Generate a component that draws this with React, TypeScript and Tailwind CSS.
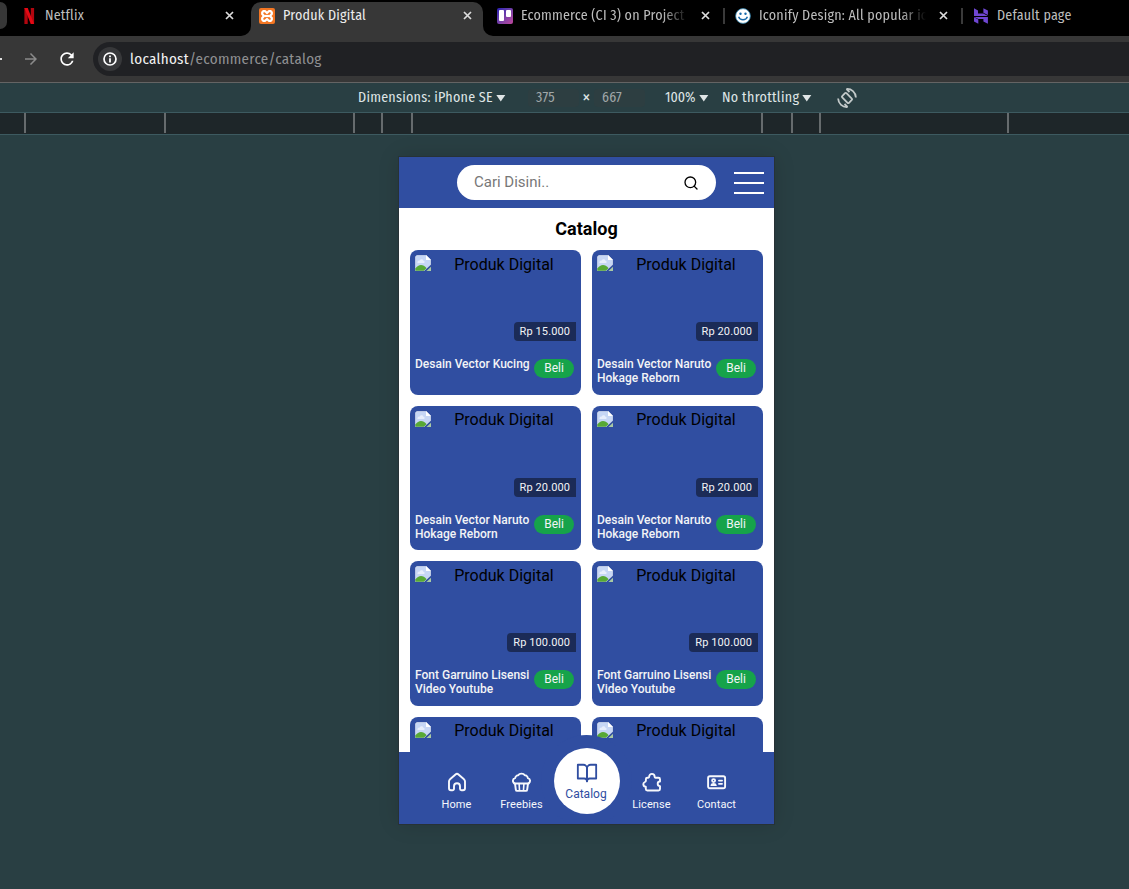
import type { ReactNode } from "react";
import { MdArrowForward, MdRefresh } from "react-icons/md";
import { FiBookOpen, FiSearch } from "react-icons/fi";

const CloseIcon = () => (
  <svg width="9" height="9" viewBox="0 0 9 9" className="shrink-0">
    <path d="M1 1L8 8M8 1L1 8" stroke="currentColor" strokeWidth="1.7" />
  </svg>
);

const InfoIcon = () => (
  <svg width="14" height="14" viewBox="0 0 14 14">
    <circle cx="7" cy="7" r="6" fill="none" stroke="currentColor" strokeWidth="1.700" />
    <path d="M6.100 3.500H7.900V5.200H6.100ZM6.100 6.200H7.900V10.500H6.100Z" fill="currentColor" />
  </svg>
);

const NetflixLogo = () => (
  <svg width="16" height="16" viewBox="0 0 16 16">
    <path d="M3.400 0H6.700V16H3.400Z M9.800 0H13.100V16H9.800Z" fill="#b1060f" />
    <path d="M3.400 0H6.700L13.100 16H9.800Z" fill="#e50914" />
  </svg>
);

const XamppLogo = () => (
  <span className="flex h-4 w-4 items-center justify-center rounded-[2px] bg-[#f37623] text-white">
    <svg width="14" height="14" viewBox="0 0 14 14" fill="none" stroke="currentColor" strokeWidth="2.2" strokeLinejoin="round">
      <path d="M3.2 2.2H5.2L7 4L8.8 2.2H10.8L11.8 3.5V5L10 7L11.8 9V10.5L10.8 11.8H8.8L7 10L5.2 11.8H3.2L2.2 10.5V9L4 7L2.2 5V3.5Z" />
      <path d="M4.5 7H9.5" />
    </svg>
  </span>
);

const TrelloLogo = () => (
  <span className="flex h-4 w-4 items-start justify-center gap-[2px] rounded-[2px] bg-linear-to-br from-[#2a1cb4] to-[#c0459a] pt-[2px]">
    <span className="h-[11px] w-[5px] rounded-[1px] bg-white" />
    <span className="h-[7px] w-[5px] rounded-[1px] bg-white" />
  </span>
);

const IconifyLogo = () => (
  <svg width="16" height="16" viewBox="0 0 16 16">
    <circle cx="8" cy="8" r="7.4" fill="#fff" stroke="#2a7ca8" strokeWidth=".8" />
    <circle cx="5.5" cy="5.7" r="1.2" fill="#1769aa" />
    <circle cx="10.5" cy="5.7" r="1.2" fill="#1769aa" />
    <path d="M3.6 8.8C5 12.8 11 12.8 12.4 8.8" fill="none" stroke="#1769aa" strokeWidth="1.4" />
  </svg>
);

const HostingerLogo = () => (
  <svg width="16" height="16" viewBox="0 0 16 16" fill="#6f46d2">
    <path d="M1 .3L5 2.500V5.600H10.400L14.900 8H1Z" />
    <path d="M10.400 .3L14.900 2.500V7L10.400 4.700Z" />
    <path d="M1 8.900H14.900V15.700L10.400 13.400V10.900H5.300L1 8.900Z" />
    <path d="M1 9.300L5.300 11.500V15.700L1 13.400Z" />
  </svg>
);

const RotateIcon = () => (
  <svg width="20" height="20" viewBox="0 0 20 20" fill="none" stroke="#c3caca" strokeWidth="1.800">
    <rect x="7" y="5.200" width="6" height="9.600" rx="1" transform="rotate(-45 10 10)" />
    <path d="M9.500 1C14.500 .6 18.600 4.400 18.900 9.500" />
    <path d="M9.500 1L12.500 4" />
    <path d="M10.500 19C5.500 19.400 1.400 15.600 1.100 10.500" />
    <path d="M10.500 19L7.500 16" />
  </svg>
);

type TabProps = { icon: ReactNode; title: string; active?: boolean; fade?: boolean; divider?: boolean; closable?: boolean };

function Tab({ icon, title, active, fade, divider, closable = true }: TabProps) {
  return (
    <div
      className={`relative flex h-[34px] w-[232px] shrink-0 items-center pb-[7px] pl-2 pr-3 ${
        active ? "rounded-t-[10px] bg-[#373737] text-[#ececec]" : "text-[#bdbdbd]"
      }`}
    >
      {active && (
        <>
          <span className="absolute bottom-0 -left-[10px] h-[10px] w-[10px] bg-[#373737]">
            <span className="block h-full w-full rounded-br-[10px] bg-black" />
          </span>
          <span className="absolute bottom-0 -right-[10px] h-[10px] w-[10px] bg-[#373737]">
            <span className="block h-full w-full rounded-bl-[10px] bg-black" />
          </span>
        </>
      )}
      {divider && <span className="absolute -left-1 top-[6px] h-4 w-[2px] bg-[#3a3a3a]" />}
      <span className="flex w-6 shrink-0">{icon}</span>
      <span
        className={`w-[167px] shrink-0 whitespace-nowrap text-[14px] leading-4 tracking-[0.2px] ${
          fade ? "mask-r-from-85% mask-r-to-100%" : ""
        }`}
      >
        {title}
      </span>
      {closable && <span className="ml-[12.500px] text-[#dcdcdc]"><CloseIcon /></span>}
    </div>
  );
}

const Caret = () => (
  <svg width="10" height="8" viewBox="0 0 10 8" className="ml-[3px]">
    <path d="M0.3 1H9.3L4.8 7.5Z" fill="#dfe5e6" />
  </svg>
);

const ticks = [24, 138, 187, 26, 28, 348, 28, 26, 186];

const BrokenImage = () => (
  <svg width="16" height="16" viewBox="0 0 16 16" className="block shrink-0">
    <path d="M3 .3H11L15.800 5V9.500L9 15.800H.3V3A2.700 2.700 0 0 1 3 .3Z" fill="#c7d7f5" stroke="#dbe1ea" strokeWidth=".6" />
    <path d="M11 0L16 5H11Z" fill="#fff" />
    <path d="M2.500 8C2 6 4 5 4.800 5.600C5.300 3.700 8 3.900 8.200 5.600C10 5.600 10 8 9 8Z" fill="#e8effc" />
    <path d="M.3 15.800V13.600C3.500 9 8 8.800 11.600 13.200L8.800 15.800Z" fill="#57a935" />
    <path d="M11.400 16L16 11.800V16Z" fill="#a9c9a4" />
  </svg>
);

function Card({ name, price }: { name?: string; price?: string }) {
  return (
    <div className="h-[144.5px] rounded-lg bg-[#304ea1] p-[5px]">
      <div className="relative flex h-[86px]">
        <BrokenImage />
        <span className="-mt-[0.2px] flex-1 pl-[1px] text-center text-[16px] leading-[19px] text-black">Produk Digital</span>
        {price && (
          <span className="absolute bottom-0 right-0 rounded-l bg-[#1b2b57] px-[6px] text-[11px] leading-[19px] tracking-[0.1px] text-[#f3f4f6]">
            {price}
          </span>
        )}
      </div>
      {name && (
        <div className="mt-4 flex items-start justify-between pr-[2px]">
          <h3 className="w-[118px] text-[12px] font-medium leading-[14px] text-[#f3f4f6]">{name}</h3>
          <button className="mt-[2px] h-[19px] w-10 shrink-0 rounded-full bg-[#16a34a] text-[12px] leading-[19px] text-[#f3f4f6]">Beli</button>
        </div>
      )}
    </div>
  );
}

const products: { name?: string; price?: string }[] = [
  { name: "Desain Vector Kucing", price: "Rp 15.000" },
  { name: "Desain Vector Naruto Hokage Reborn", price: "Rp 20.000" },
  { name: "Desain Vector Naruto Hokage Reborn", price: "Rp 20.000" },
  { name: "Desain Vector Naruto Hokage Reborn", price: "Rp 20.000" },
  { name: "Font Garruino Lisensi Video Youtube", price: "Rp 100.000" },
  { name: "Font Garruino Lisensi Video Youtube", price: "Rp 100.000" },
  {},
  {},
];

const Glyph = ({ children }: { children: ReactNode }) => (
  <svg width="20" height="20" viewBox="0 -0.3 20 20" fill="none" stroke="currentColor" strokeWidth="1.9" strokeLinecap="round" strokeLinejoin="round">
    {children}
  </svg>
);

const HomeIcon = () => (
  <Glyph>
    <path d="M2 9.200C2 8.300 2.400 7.600 3 7L8.500 2.200C9.400 1.400 10.600 1.400 11.500 2.200L17 7C17.600 7.600 18 8.300 18 9.200V16A2 2 0 0 1 16 18H14.500A1.500 1.500 0 0 1 13 16.500V14A3 3 0 0 0 7 14V16.500A1.500 1.500 0 0 1 5.500 18H4A2 2 0 0 1 2 16Z" />
  </Glyph>
);

const CupcakeIcon = () => (
  <Glyph>
    <g transform="translate(-0.5 0)">
      <path d="M3 11C.8 9.800 .8 6.600 3.600 5.900C4 3.700 5.800 2.900 6.700 3C8 .8 12 .8 13.300 3C14.800 2.900 16.200 4.300 16.400 5.900C19.200 6.600 19.200 9.800 17 11" />
      <path d="M2.800 11.200H17.200M3.500 11.200L4.300 17.200Q4.500 18.600 5.600 18.600H14.400Q15.500 18.600 15.700 17.200L16.500 11.200" />
      <path d="M7.600 11.500L8 18M12.400 11.500L12 18" strokeWidth="1.600" />
    </g>
  </Glyph>
);

const PuzzleIcon = () => (
  <Glyph>
    <path d="M5.300 5.400H6.300C6.800 5.400 7.200 5 7.200 4.300A2.700 2.700 0 0 1 12.600 4.300C12.600 5 13 5.400 13.500 5.400H16.500A1.500 1.500 0 0 1 18 6.900V9.200A2.300 2.300 0 0 0 18 13.800V16.700A1.500 1.500 0 0 1 16.500 18.200H5.300A1.500 1.500 0 0 1 3.800 16.700V14.500A2.500 2.500 0 0 1 2.900 9.700C3.600 9.400 3.900 8.900 3.900 8.200V6.800A1.400 1.400 0 0 1 5.300 5.400Z" />
  </Glyph>
);

const ContactIcon = () => (
  <Glyph>
    <g transform="translate(-0.4 0)">
      <rect x="1.500" y="4" width="17" height="12" rx="1.800" />
      <circle cx="7" cy="8.300" r="1.500" />
      <path d="M4.500 13C5 10.900 9 10.900 9.500 13Z" strokeWidth="1.400" />
      <path d="M12.300 8.300H15.500M12.300 11.500H15.500" strokeWidth="1.700" />
    </g>
  </Glyph>
);

function NavItem({ icon, label }: { icon: ReactNode; label: string }) {
  return (
    <a className="flex w-[65px] flex-col items-center pt-5 text-[#f6f8fc]">
      {icon}
      <span className="mt-[6px] text-[11px] leading-[14px] tracking-[0.1px]">{label}</span>
    </a>
  );
}

export default function App() {
  return (
    <div className="flex h-[889px] w-[1129px] flex-col overflow-hidden bg-[#293f43] font-['Fira_Sans_Condensed','Fira_Sans','Noto_Sans',sans-serif]">
      <div className="flex h-9 shrink-0 gap-[6px] overflow-hidden bg-black pt-[2px]">
        <div className="h-[27px] w-[7px] shrink-0 rounded-r-lg bg-[#373737]" />
        <Tab icon={<NetflixLogo />} title="Netflix" />
        <Tab icon={<XamppLogo />} title="Produk Digital" active />
        <Tab icon={<TrelloLogo />} title="Ecommerce (CI 3) on Project" fade />
        <Tab icon={<IconifyLogo />} title="Iconify Design: All popular ic" fade divider />
        <Tab icon={<HostingerLogo />} title="Default page" divider closable={false} />
      </div>

      <div className="flex h-[47px] shrink-0 items-center overflow-hidden border-b border-[#646464] bg-[#373737]">
        <span className="h-[2px] w-[2px] bg-[#dedede]" />
        <MdArrowForward size={18} className="ml-5 text-[#8b8b8b]" />
        <MdRefresh size={20} className="ml-[17px] text-white" />
        <div className="ml-[16px] flex h-[34px] flex-1 items-center rounded-l-full bg-[#202124] pl-[5px]">
          <span className="flex h-6 w-6 items-center justify-center rounded-full bg-[#37383a] text-white">
            <InfoIcon />
          </span>
          <span className="ml-2 text-[15px] leading-5 tracking-[0.3px] text-[#8f9092]">
            <span className="text-[#f1f1f1]">localhost</span>/ecommerce/catalog
          </span>
        </div>
      </div>

      <div className="flex h-[30px] shrink-0 items-center border-b border-[#3d5a60] pl-[358px] text-[14px] tracking-[0.25px] text-[#dfe5e6]">
        <span className="flex w-[170px] items-center">Dimensions: iPhone SE<Caret /></span>
        <span className="w-[51px] rounded bg-[#2d3e41] pl-2 leading-[18px] text-[#a0a7a8]">375</span>
        <span className="w-[15px] text-center text-[18px]">×</span>
        <span className="w-[51px] rounded bg-[#2d3e41] pl-2 leading-[18px] text-[#a0a7a8]">667</span>
        <span className="ml-5 flex w-[57px] items-center tracking-[0px]">100%<Caret /></span>
        <span className="flex w-[115px] items-center tracking-[0.32px]">No throttling<Caret /></span>
        <RotateIcon />
      </div>

      <div className="flex h-[22px] shrink-0 border-b border-[#3d5a60] bg-[#1e2629]">
        {ticks.map((gap, i) => (
          <span key={i} className="h-5 shrink-0 border-r-2 border-[#666b6d]" style={{ width: gap + 2 }} />
        ))}
      </div>

      <main className="flex flex-1 justify-center pl-[45px] pt-[22px] font-['Roboto',sans-serif]">
        <section className="relative -ml-[1px] flex h-[667px] w-[375px] flex-col overflow-hidden bg-white shadow-[0_0_0_1px_#273236,0_0_20px_rgba(0,0,0,0.15)]">
          <header className="flex h-[51px] shrink-0 items-center justify-between bg-[#304ea1] pl-[58px] pr-[10px]">
            <div className="flex h-[35px] w-[259px] items-center justify-between rounded-full bg-white px-[17px]">
              <span className="pb-px text-[15px] leading-5 text-[#777]">Cari Disini..</span>
              <FiSearch size={16} className="text-black" />
            </div>
            <div className="flex w-[30px] flex-col gap-2 pt-[1px]">
              <span className="h-[2px] bg-white" />
              <span className="h-[2px] bg-white" />
              <span className="h-[2px] bg-white" />
            </div>
          </header>
          <h1 className="mt-[9px] text-center text-[18px] font-bold leading-6 text-black">Catalog</h1>
          <div className="mt-[9px] grid grid-cols-2 gap-[11px] px-[11px]">
            {products.map((product, i) => (
              <Card key={i} {...product} />
            ))}
          </div>
          <nav className="absolute bottom-0 left-0 flex h-[72px] w-full justify-center bg-[#304ea1]">
            <NavItem icon={<HomeIcon />} label="Home" />
            <NavItem icon={<CupcakeIcon />} label="Freebies" />
            <a className="relative w-[65px]">
              <span className="absolute -left-[13px] -top-[17px] flex h-[91px] w-[91px] items-center justify-center rounded-full bg-[#304ea1]">
                <span className="flex h-[66px] w-[66px] flex-col items-center rounded-full bg-white pt-[14px] text-[#304ea1]">
                  <FiBookOpen size={22} />
                  <span className="mt-[2px] pr-px text-[12px] leading-4">Catalog</span>
                </span>
              </span>
            </a>
            <NavItem icon={<PuzzleIcon />} label="License" />
            <NavItem icon={<ContactIcon />} label="Contact" />
          </nav>
        </section>
      </main>
    </div>
  );
}
